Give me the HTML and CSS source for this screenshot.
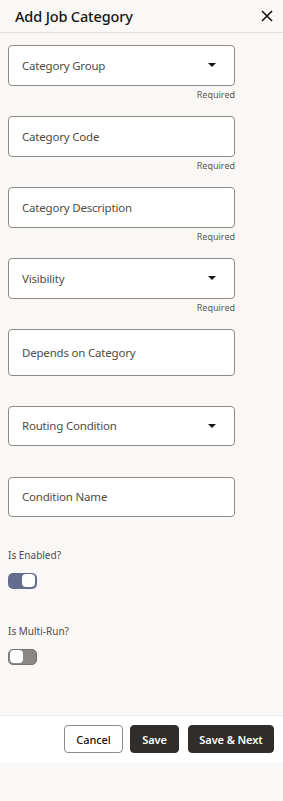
FILE: index.html
```html
<!DOCTYPE html>
<html lang="en">
<head>
<meta charset="utf-8">
<title>Add Job Category</title>
<link rel="stylesheet" href="styles.css">
</head>
<body>
<div class="drawer">
  <header class="header">
    <h1 class="title">Add Job Category</h1>
    <button class="close" aria-label="Close">
      <svg width="12" height="12" viewBox="0 0 12 12"><path d="M1 1 L11 11 M11 1 L1 11" stroke="#161513" stroke-width="1.6" fill="none"/></svg>
    </button>
  </header>
  <form class="form">
    <div class="field">
      <div class="box"><span class="label">Category Group</span><span class="caret"></span></div>
      <div class="helper">Required</div>
    </div>
    <div class="field">
      <div class="box"><span class="label">Category Code</span></div>
      <div class="helper">Required</div>
    </div>
    <div class="field">
      <div class="box"><span class="label">Category Description</span></div>
      <div class="helper">Required</div>
    </div>
    <div class="field">
      <div class="box"><span class="label">Visibility</span><span class="caret"></span></div>
      <div class="helper">Required</div>
    </div>
    <div class="field">
      <div class="box box-tall"><span class="label">Depends on Category</span></div>
      <div class="helper helper-short"></div>
    </div>
    <div class="field">
      <div class="box"><span class="label">Routing Condition</span><span class="caret"></span></div>
      <div class="helper"></div>
    </div>
    <div class="field">
      <div class="box"><span class="label">Condition Name</span></div>
      <div class="helper"></div>
    </div>
    <div class="switch-field">
      <div class="switch-label">Is Enabled?</div>
      <div class="switch on"><span class="thumb"></span></div>
    </div>
    <div class="switch-field switch-field-next">
      <div class="switch-label">Is Multi-Run?</div>
      <div class="switch off"><span class="thumb"></span></div>
    </div>
  </form>
  <footer class="footer">
    <button class="btn btn-outline btn-cancel" type="button">Cancel</button>
    <button class="btn btn-solid btn-save" type="button">Save</button>
    <button class="btn btn-solid btn-next" type="button">Save &amp; Next</button>
  </footer>
</div>
</body>
</html>
```
FILE: styles.css
```css
* { box-sizing: border-box; }
html, body { margin: 0; padding: 0; }
body {
  background: #f9f8f6;
  font-family: "Noto Sans", "Open Sans", sans-serif;
  color: #161513;
  width: 283px;
  height: 801px;
}
.header {
  height: 33px;
  border-bottom: 1px solid #e4e1dd;
  display: flex;
  align-items: center;
  justify-content: space-between;
  padding: 0 9px 0 15px;
}
.title {
  margin: 0;
  font-size: 14.5px;
  font-weight: 500;
  color: #161513;
  letter-spacing: -0.15px;
}
.close {
  border: 0;
  background: none;
  padding: 0;
  width: 14px;
  height: 14px;
  display: flex;
  align-items: center;
  justify-content: center;
}
.form {
  padding: 12px 48px 0 8px;
}
.field {
  display: flex;
  flex-direction: column;
}
.box {
  height: 40.5px;
  background: #fff;
  border: 1px solid #8e8983;
  border-radius: 4px;
  display: flex;
  align-items: center;
  justify-content: space-between;
  padding: 0 18px 0 13px;
}
.box-tall { height: 47px; }
.label {
  font-size: 11.5px;
  color: #4f4b47;
  letter-spacing: -0.2px;
}
.caret {
  width: 0;
  height: 0;
  border-left: 4px solid transparent;
  border-right: 4px solid transparent;
  border-top: 4px solid #161513;
}
.helper {
  height: 30.5px;
  font-size: 9px;
  color: #5c5854;
  text-align: right;
  padding-top: 3px;
  line-height: 12px;
}
.helper-short { height: 29.5px; }
.switch-field {
  display: flex;
  flex-direction: column;
  align-items: flex-start;
}
.switch-field-next { margin-top: 35px; }
.switch-label {
  font-size: 10px;
  color: #4f4b47;
  line-height: 14px;
}
.switch {
  margin-top: 11px;
  width: 29px;
  height: 16px;
  border-radius: 5px;
  display: flex;
  align-items: center;
  padding: 0 2px;
}
.switch .thumb {
  width: 13px;
  height: 13px;
  border-radius: 4px;
  background: #fff;
}
.switch.on {
  background: #656d8e;
  justify-content: flex-end;
}
.switch.off {
  background: #8a8886;
  justify-content: flex-start;
  border: 1px solid #767371;
  padding: 0 1px;
}
.footer {
  margin-top: 50px;
  background: #fff;
  height: 48px;
  display: flex;
  align-items: center;
  justify-content: flex-end;
  padding: 0 9px 0 0;
  border-top: 1px solid #efedea;
}
.btn {
  height: 28px;
  border-radius: 4px;
  font-family: inherit;
  font-size: 11px;
  font-weight: 600;
  padding: 0;
  letter-spacing: -0.1px;
}
.btn-cancel { width: 59px; }
.btn-save { width: 49px; margin-left: 7px; }
.btn-next { width: 86px; margin-left: 9px; }
.btn-outline {
  background: #fff;
  border: 1px solid #8e8983;
  color: #161513;
  font-weight: 500;
}
.btn-solid {
  background: #312d2a;
  border: 1px solid #312d2a;
  color: #fff;
}
```
